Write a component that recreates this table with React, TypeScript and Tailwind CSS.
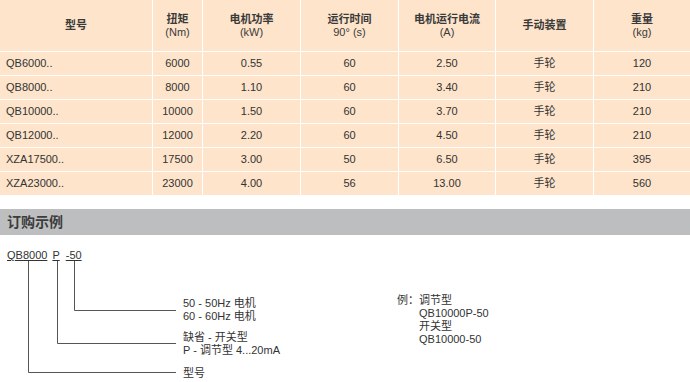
const font = { fontFamily: '"Liberation Sans", Arial, "Noto Sans CJK SC", sans-serif' }

const headers: [string, string?][] = [
  ['型号'],
  ['扭矩', '(Nm)'],
  ['电机功率', '(kW)'],
  ['运行时间', '90° (s)'],
  ['电机运行电流', '(A)'],
  ['手动装置'],
  ['重量', '(kg)'],
]

const rows = [
  ['QB6000..', '6000', '0.55', '60', '2.50', '手轮', '120'],
  ['QB8000..', '8000', '1.10', '60', '3.40', '手轮', '210'],
  ['QB10000..', '10000', '1.50', '60', '3.70', '手轮', '210'],
  ['QB12000..', '12000', '2.20', '60', '4.50', '手轮', '210'],
  ['XZA17500..', '17500', '3.00', '50', '6.50', '手轮', '395'],
  ['XZA23000..', '23000', '4.00', '56', '13.00', '手轮', '560'],
]

export default function App() {
  return (
    <div className="w-[690px] h-[382px] bg-white text-[11px] leading-[13px] text-[#333] overflow-hidden" style={font}>
      {/* spec table */}
      <div className="grid grid-cols-[152px_49px_97px_97px_96px_97px_96px] gap-px bg-white">
        {headers.map(([a, b], i) => (
          <div key={i} className="h-[51px] bg-[#fde4cb] flex flex-col items-center justify-center font-bold text-[#3a3a3a]">
            <span>{a}</span>
            {b && <span className="font-normal">{b}</span>}
          </div>
        ))}
        {rows.map((r, ri) =>
          r.map((c, ci) => (
            <div
              key={ri + '-' + ci}
              className={
                'h-[23px] bg-[#fde4cb] flex items-center ' +
                (ci === 0 ? 'pl-[6px]' : 'justify-center')
              }
            >
              {c}
            </div>
          ))
        )}
      </div>

      <div className="mt-[14px] h-[26px] bg-[#bdbec0] flex items-center pl-[7px] text-[14px] font-bold text-[#3c3c3c]">
        订购示例
      </div>

      {/* ordering example */}
      <div className="flex">
        <div className="relative w-[390px] h-[147px] shrink-0">
          <svg className="absolute inset-0" width="390" height="147" fill="none" stroke="#555" strokeWidth="1">
            <path d="M28.5 25 V137.5 H176" />
            <path d="M57.5 25 V108.5 H176" />
            <path d="M74.5 25 V75.5 H176" />
          </svg>
          <div className="absolute left-[7px] top-[14px] flex gap-[5px]">
            <span className="underline">QB8000</span>
            <span className="underline">P</span>
            <span className="underline ml-[1px]">-50</span>
          </div>
          <div className="absolute left-[183px] top-[62px]">
            <div>50 - 50Hz 电机</div>
            <div>60 - 60Hz 电机</div>
          </div>
          <div className="absolute left-[183px] top-[96px]">
            <div>缺省 - 开关型</div>
            <div>P - 调节型 4...20mA</div>
          </div>
          <div className="absolute left-[183px] top-[132px]">型号</div>
        </div>
        <div className="ml-[7px] pt-[59px] flex">
          <span>例：</span>
          <div>
            <div>调节型</div>
            <div>QB10000P-50</div>
            <div>开关型</div>
            <div>QB10000-50</div>
          </div>
        </div>
      </div>
    </div>
  )
}
